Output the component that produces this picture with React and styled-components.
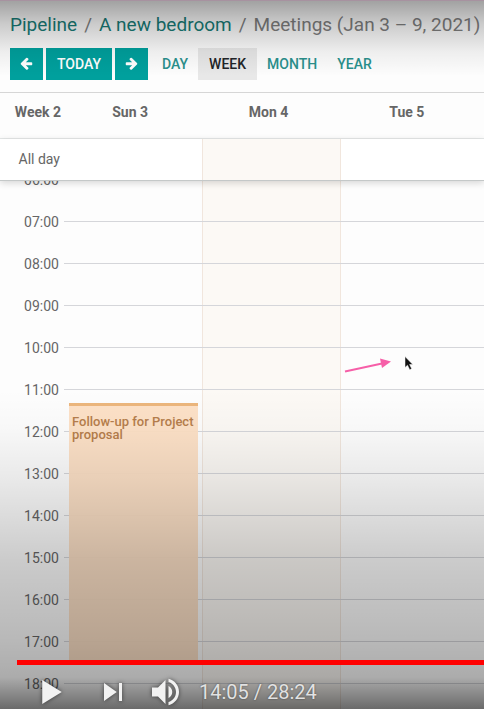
import React from 'react';
import styled, { createGlobalStyle } from 'styled-components';

const HOUR_HEIGHT = 42;
const FIRST_HOUR = 6;

const hours = Array.from({ length: 13 }, (_, i) => FIRST_HOUR + i);

const days = [
    { id: 'sun', label: 'Sun 3', events: [{ title: 'Follow-up for Project proposal', start: 11.33, end: 17.5 }] },
    { id: 'mon', label: 'Mon 4', today: true, events: [] },
    { id: 'tue', label: 'Tue 5', events: [] },
];

const views = ['Day', 'Week', 'Month', 'Year'];

const GlobalStyle = createGlobalStyle`
    * {
        box-sizing: border-box;
    }
    body {
        margin: 0;
        background-color: #fdfdfd;
        color: #666;
        font-family: Roboto, "Liberation Sans", sans-serif;
        font-size: 14px;
    }
    button {
        border: 0;
        padding: 0;
        background: none;
        font-family: inherit;
        cursor: pointer;
    }
`;

const Screen = styled.main`
    position: relative;
    display: flex;
    flex-direction: column;
    height: 100vh;
    overflow: hidden;
`;

const ControlPanel = styled.header`
    padding: 12px 0 12px 10px;
    border-bottom: 1px solid #d6d6d6;
`;

const Breadcrumb = styled.nav`
    display: flex;
    gap: 7px;
    height: 26px;
    font-size: 19px;
    line-height: 26px;
    white-space: nowrap;
    color: #808080;
    a {
        color: #187d78;
        text-decoration: none;
    }
`;

const Toolbar = styled.div`
    display: flex;
    gap: 3px;
    margin-top: 10px;
`;

const NavButton = styled.button`
    display: flex;
    align-items: center;
    justify-content: center;
    height: 32px;
    min-width: 33px;
    padding: 0 ${({ $wide }) => ($wide ? '11px' : '0')};
    background-color: #00a09d;
    color: #fff;
    font-size: 14px;
    font-weight: 500;
    text-transform: uppercase;
`;

const ArrowSvg = styled.svg`
    width: 13px;
    height: 14px;
    fill: currentColor;
    transform: ${({ $flip }) => ($flip ? 'scaleX(-1)' : 'none')};
`;

const ViewButton = styled.button`
    height: 32px;
    padding: 0 ${({ $active }) => ($active ? '11px' : '10px')};
    background-color: ${({ $active }) => ($active ? '#e8e8e8' : 'transparent')};
    color: ${({ $active }) => ($active ? '#212529' : '#2a918d')};
    font-size: 14px;
    font-weight: 500;
    text-transform: uppercase;
`;

const Views = styled.div`
    display: flex;
    margin-left: 1px;
`;

const DayHeader = styled.div`
    display: grid;
    grid-template-columns: 61px repeat(3, 1fr) 8px;
    align-items: center;
    height: 46px;
    padding-bottom: 8px;
    border-bottom: 1px solid #e5e8e8;
    font-weight: 700;
    text-align: center;
`;

const WeekLabel = styled.div`
    text-align: right;
`;

const columns = `
    display: grid;
    grid-template-columns: 64px repeat(3, 1fr) 6px;
`;

const AllDay = styled.div`
    ${columns}
    position: relative;
    z-index: 1;
    height: 42px;
    flex-shrink: 0;
    border-bottom: 1px solid #c4c8c8;
    background-color: #fff;
    box-shadow: 0 2px 7px rgba(0, 0, 0, 0.16);
    line-height: 40px;
`;

const AllDayLabel = styled.div`
    padding-right: 4px;
    text-align: right;
`;

const DayCell = styled.div`
    position: relative;
    background-color: ${({ $today }) => ($today ? '#fcf9f5' : 'transparent')};
    border: solid ${({ $today }) => ($today ? '#f1e6dd' : 'transparent')};
    border-width: 0 1px;
    margin-right: ${({ $today }) => ($today ? '-1px' : '0')};
`;

const TimeGrid = styled.section`
    flex: 1;
    min-height: 0;
    overflow: hidden;
`;

const TimeBody = styled.div`
    position: relative;
    margin-top: -23px;
    padding-bottom: 21px;
`;

const DayLayer = styled.div`
    ${columns}
    position: absolute;
    inset: 0;
`;

const HourRow = styled.div`
    position: relative;
    display: flex;
    align-items: center;
    gap: 5px;
    height: ${HOUR_HEIGHT}px;
    &::after {
        content: '';
        flex: 1;
        height: 1px;
        background-color: #d5d6da;
    }
`;

const HourLabel = styled.div`
    width: 59px;
    padding-top: 2px;
    text-align: right;
`;

const Event = styled.article`
    position: absolute;
    left: 4px;
    right: 3px;
    z-index: 1;
    padding: 9px 0 0 3px;
    border-top: 3px solid #ecb67d;
    background-color: rgba(253, 223, 196, 0.95);
    color: #b67e4c;
    font-size: 13px;
    font-weight: 500;
    line-height: 13px;
`;

const TopShade = styled.div`
    position: absolute;
    inset: 0 0 auto;
    z-index: 2;
    height: 76px;
    border-top: 1px solid #a792a0;
    background: linear-gradient(rgba(0, 0, 0, 0.36), rgba(0, 0, 0, 0.2) 30%, rgba(0, 0, 0, 0.06) 68%, transparent);
    pointer-events: none;
`;

const BottomShade = styled.div`
    position: absolute;
    inset: auto 0 0;
    z-index: 2;
    height: 320px;
    background: linear-gradient(transparent, rgba(0, 0, 0, 0.02) 12%, rgba(0, 0, 0, 0.08) 28%, rgba(0, 0, 0, 0.2) 54%, rgba(0, 0, 0, 0.27) 78%, rgba(0, 0, 0, 0.32) 90%, rgba(0, 0, 0, 0.58));
    pointer-events: none;
`;

const Player = styled.footer`
    position: absolute;
    inset: auto 0 0;
    z-index: 3;
`;

const Progress = styled.div`
    height: 5px;
    margin-left: 17px;
    background-color: #f00;
`;

const Controls = styled.div`
    display: flex;
    align-items: center;
    padding: 12px 0 2px 42px;
    color: #e2e2e2;
    font-size: 20px;
    line-height: 30px;
    text-shadow: 0 0 2px rgba(0, 0, 0, 0.5);
`;

const PlayerButton = styled.button`
    margin-right: ${({ $gap }) => $gap}px;
    svg {
        display: block;
        height: 30px;
        overflow: visible;
        fill: #f2f2f2;
        filter: drop-shadow(0 0 2px rgba(0, 0, 0, 0.6));
    }
`;

const Pointer = styled.svg`
    position: absolute;
    left: 342px;
    top: 350px;
    z-index: 2;
`;

const Arrow = ({ flip }) => (
    <ArrowSvg $flip={flip} viewBox="0 100 1600 1792" aria-hidden="true">
        <path d="M1536 896v128q0 53-32.500 90.500t-84.500 37.500h-704l293 294q38 36 38 90t-38 90l-75 76q-37 37-90 37-52 0-91-37l-651-652q-37-37-37-90 0-52 37-91l651-650q38-38 91-38 52 0 90 38l75 74q38 38 38 91t-38 91l-293 293h704q52 0 84.500 37.500t32.500 90.500z" />
    </ArrowSvg>
);

const CalendarEvent = ({ event }) => (
    <Event
        style={{
            top: Math.round((event.start - FIRST_HOUR + 0.5) * HOUR_HEIGHT),
            height: Math.round((event.end - event.start) * HOUR_HEIGHT),
        }}
    >
        {event.title}
    </Event>
);

const App = () => (
    <>
        <GlobalStyle />
        <Screen>
            <ControlPanel>
                <Breadcrumb aria-label="Breadcrumb">
                    <a href="#pipeline">Pipeline</a>
                    <span>/</span>
                    <a href="#bedroom">A new bedroom</a>
                    <span>/</span>
                    <span>Meetings (Jan 3 – 9, 2021)</span>
                </Breadcrumb>
                <Toolbar>
                    <NavButton aria-label="Previous week"><Arrow /></NavButton>
                    <NavButton $wide>Today</NavButton>
                    <NavButton aria-label="Next week"><Arrow flip /></NavButton>
                    <Views>
                        {views.map(view => (
                            <ViewButton key={view} $active={view === 'Week'}>{view}</ViewButton>
                        ))}
                    </Views>
                </Toolbar>
            </ControlPanel>

            <DayHeader>
                <WeekLabel>Week 2</WeekLabel>
                {days.map(day => <div key={day.id}>{day.label}</div>)}
            </DayHeader>
            <AllDay>
                <AllDayLabel>All day</AllDayLabel>
                {days.map(day => <DayCell key={day.id} $today={day.today} />)}
            </AllDay>

            <TimeGrid>
                <TimeBody>
                    <DayLayer>
                        <span />
                        {days.map(day => (
                            <DayCell key={day.id} $today={day.today}>
                                {day.events.map(event => <CalendarEvent key={event.title} event={event} />)}
                            </DayCell>
                        ))}
                    </DayLayer>
                    {hours.map(hour => (
                        <HourRow key={hour}>
                            <HourLabel>{String(hour).padStart(2, '0')}:00</HourLabel>
                        </HourRow>
                    ))}
                </TimeBody>
            </TimeGrid>

            <Pointer width="76" height="26" viewBox="0 0 76 26" aria-hidden="true">
                <path d="M3 21.500 40 13.500" stroke="#f65fa8" strokeWidth="2" />
                <path d="M38 8.500 49 11.500 40 18z" fill="#f65fa8" />
                <path d="M63 6.500v11l2.500-2.300 2.200 4.500 2-.9-2.100-4.300h3.200z" fill="#111" stroke="#fff" strokeWidth=".5" />
            </Pointer>

            <TopShade />
            <BottomShade />

            <Player>
                <Progress role="progressbar" aria-label="Video progress" />
                <Controls>
                    <PlayerButton $gap={42} aria-label="Play">
                        <svg width="20" viewBox="12 8 13 20"><path d="M12 10 25 18 12 26z" /></svg>
                    </PlayerButton>
                    <PlayerButton $gap={30} aria-label="Next">
                        <svg width="18" viewBox="12 8 12 20"><path d="M12 24 20.500 18 12 12zM22 12v12h2V12z" /></svg>
                    </PlayerButton>
                    <PlayerButton $gap={20} aria-label="Mute">
                        <svg width="27" viewBox="8 8 18 20">
                            <path d="M8 21h4l5 5V10l-5 5H8zM19 14v8c1.480-.68 2.500-2.230 2.500-4s-1.020-3.260-2.500-4zM19 11.290c2.890.86 5 3.540 5 6.710s-2.110 5.850-5 6.710v2.060c4.010-.91 7-4.490 7-8.770s-2.990-7.860-7-8.770z" />
                        </svg>
                    </PlayerButton>
                    <span>14:05 / 28:24</span>
                </Controls>
            </Player>
        </Screen>
    </>
);

export default App;
